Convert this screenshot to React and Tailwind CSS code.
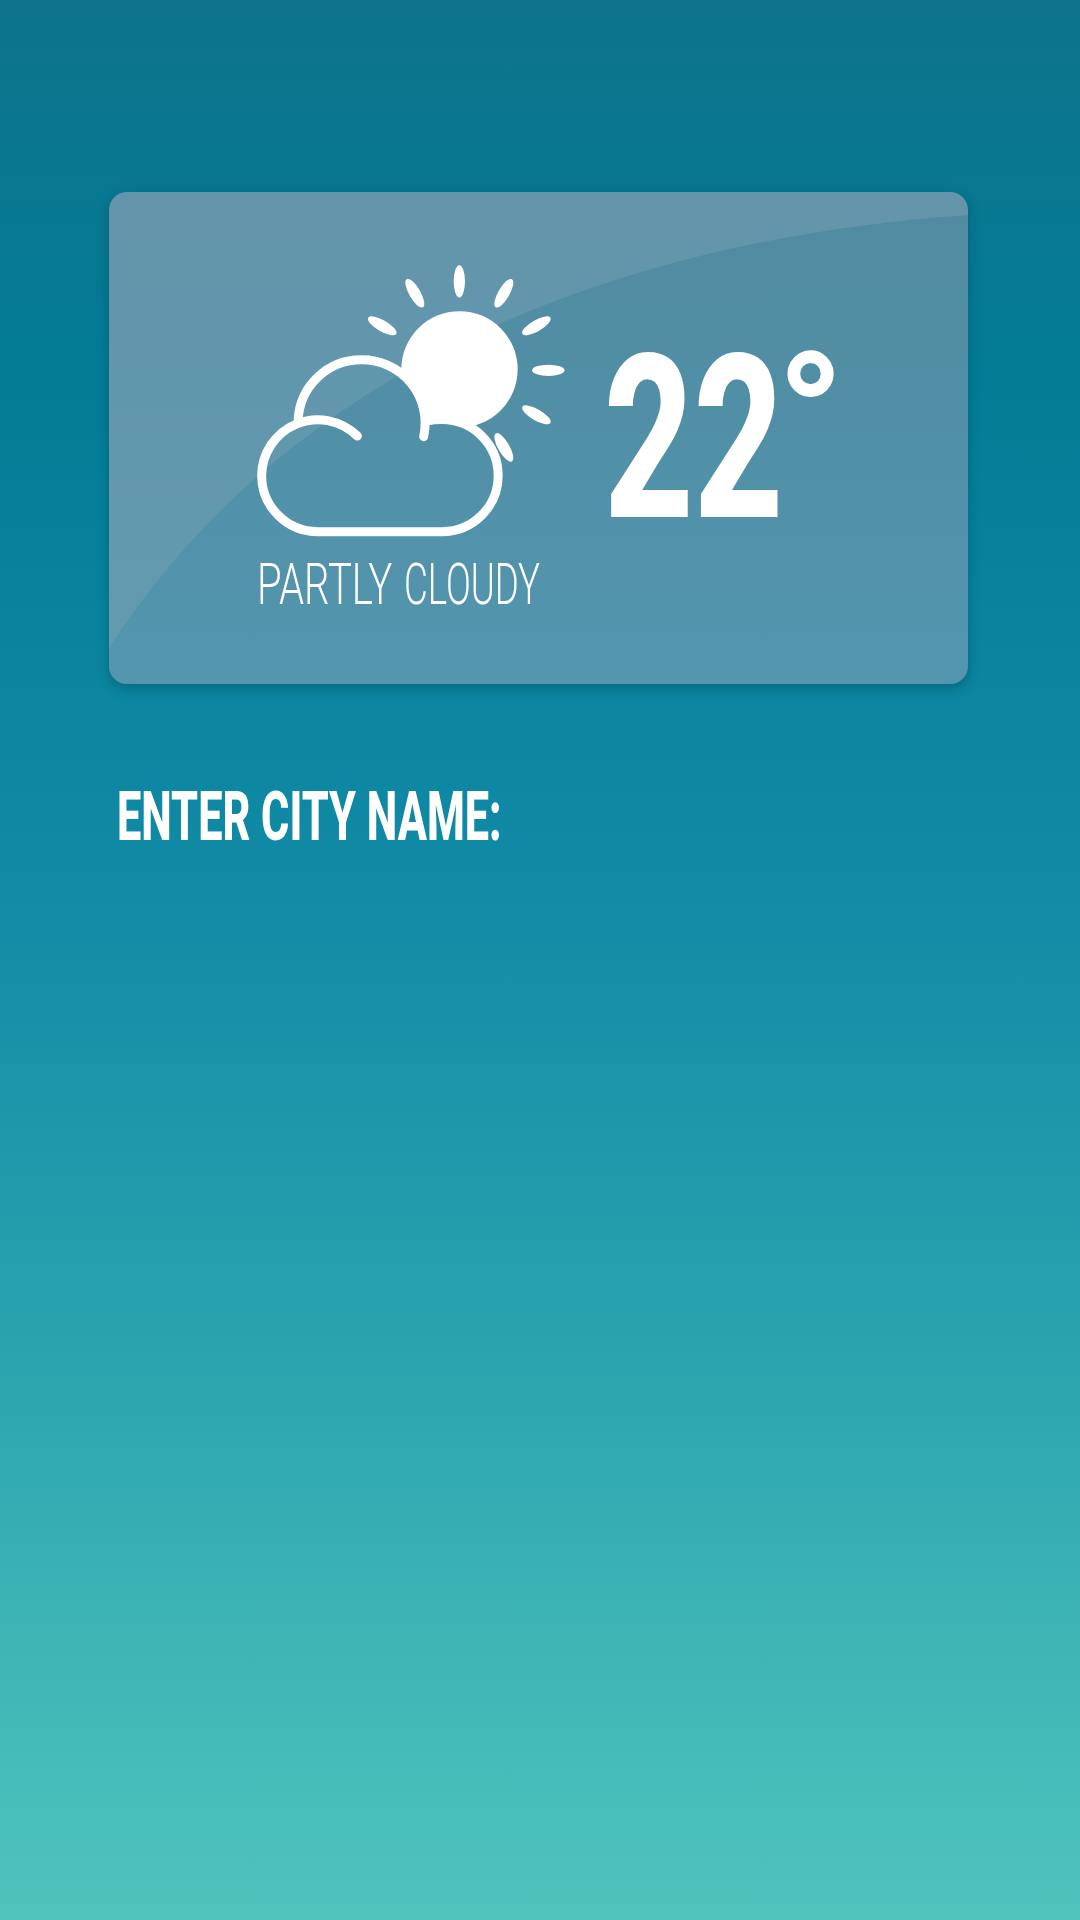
const rayAngles = [-150, -120, -90, -60, -30, 0, 30, 60];

function PartlyCloudyIcon() {
  return (
    <svg viewBox="0 0 1020 900" className="h-[300px] w-[340px]" fill="none" aria-hidden="true">
      <mask id="behind-cloud" maskUnits="userSpaceOnUse" x="0" y="0" width="1020" height="900">
        <rect width="1020" height="900" fill="white" />
        <circle cx="364" cy="519" r="189" fill="black" />
        <circle cx="606" cy="677" r="168" fill="black" />
      </mask>
      <g fill="white">
        <circle cx="658.5" cy="358" r="174.5" mask="url(#behind-cloud)" />
        {rayAngles.map((a) => (
          <ellipse key={a} cx="925" cy="361" rx="48.5" ry="17" transform={`rotate(${a} 658 361)`} />
        ))}
      </g>
      <g stroke="white" strokeWidth="27" strokeLinecap="round">
        <path d="M352 558A168.500 168.500 0 0 0 65 677A168.500 168.500 0 0 0 233.500 845H606A168.500 168.500 0 0 0 774.500 677A168.500 168.500 0 0 0 606 508.500Q580 508.500 560 513" />
        <path d="M174.500 508A189.500 189.500 0 0 1 364 329.500A189.500 189.500 0 0 1 551 560" />
      </g>
    </svg>
  );
}

export default function App() {
  return (
    <main className="h-[1920px] w-[1080px] overflow-hidden bg-[linear-gradient(180deg,#0e738c_0%,#037c96_20%,#118ba6_47%,#2ba4af_71%,#3fb5b6_86%,#4fc4bd_100%)] pt-48 font-['Roboto',sans-serif] text-white">
      <section className="relative ml-[109px] flex h-[492px] w-[859px] overflow-hidden rounded-[18px] bg-[#bfb2c4]/50 shadow-[0_4px_12px_rgba(0,60,80,0.4)]">
        <svg viewBox="109 192 859 492" className="absolute inset-0 h-full w-full" aria-hidden="true">
          <linearGradient id="shade" x1="0" y1="0" x2="0" y2="1">
            <stop offset="0" stopColor="#12677d" />
            <stop offset="1" stopColor="#1584a6" />
          </linearGradient>
          <path d="M109 648C254 422 531.500 245.500 968 215V684H109Z" fill="url(#shade)" fillOpacity="0.22" />
        </svg>
        <div className="relative ml-[131px] mt-[58px] w-[340px]">
          <PartlyCloudyIcon />
          <p className="ml-[17px] -mt-[7px] flex whitespace-nowrap text-[56.700px] leading-[84px] font-light">
            <span className="w-[146.500px] origin-left scale-x-[0.707]">PARTLY </span>
            <span className="origin-left scale-x-[0.646]">CLOUDY</span>
          </p>
        </div>
        <div className="relative mt-[113px] ml-[24px] flex leading-[268px]">
          <span className="block w-[173px] origin-left scale-x-[0.680] text-[229px] font-extrabold">22</span>
          <span className="-mt-[23px] block text-[170px] font-black">°</span>
        </div>
      </section>
      <label className="mt-[88px] ml-[117px] block w-fit origin-left scale-x-[0.624] text-[69.300px] leading-[90px] font-extrabold whitespace-nowrap">ENTER CITY NAME:</label>
    </main>
  );
}
